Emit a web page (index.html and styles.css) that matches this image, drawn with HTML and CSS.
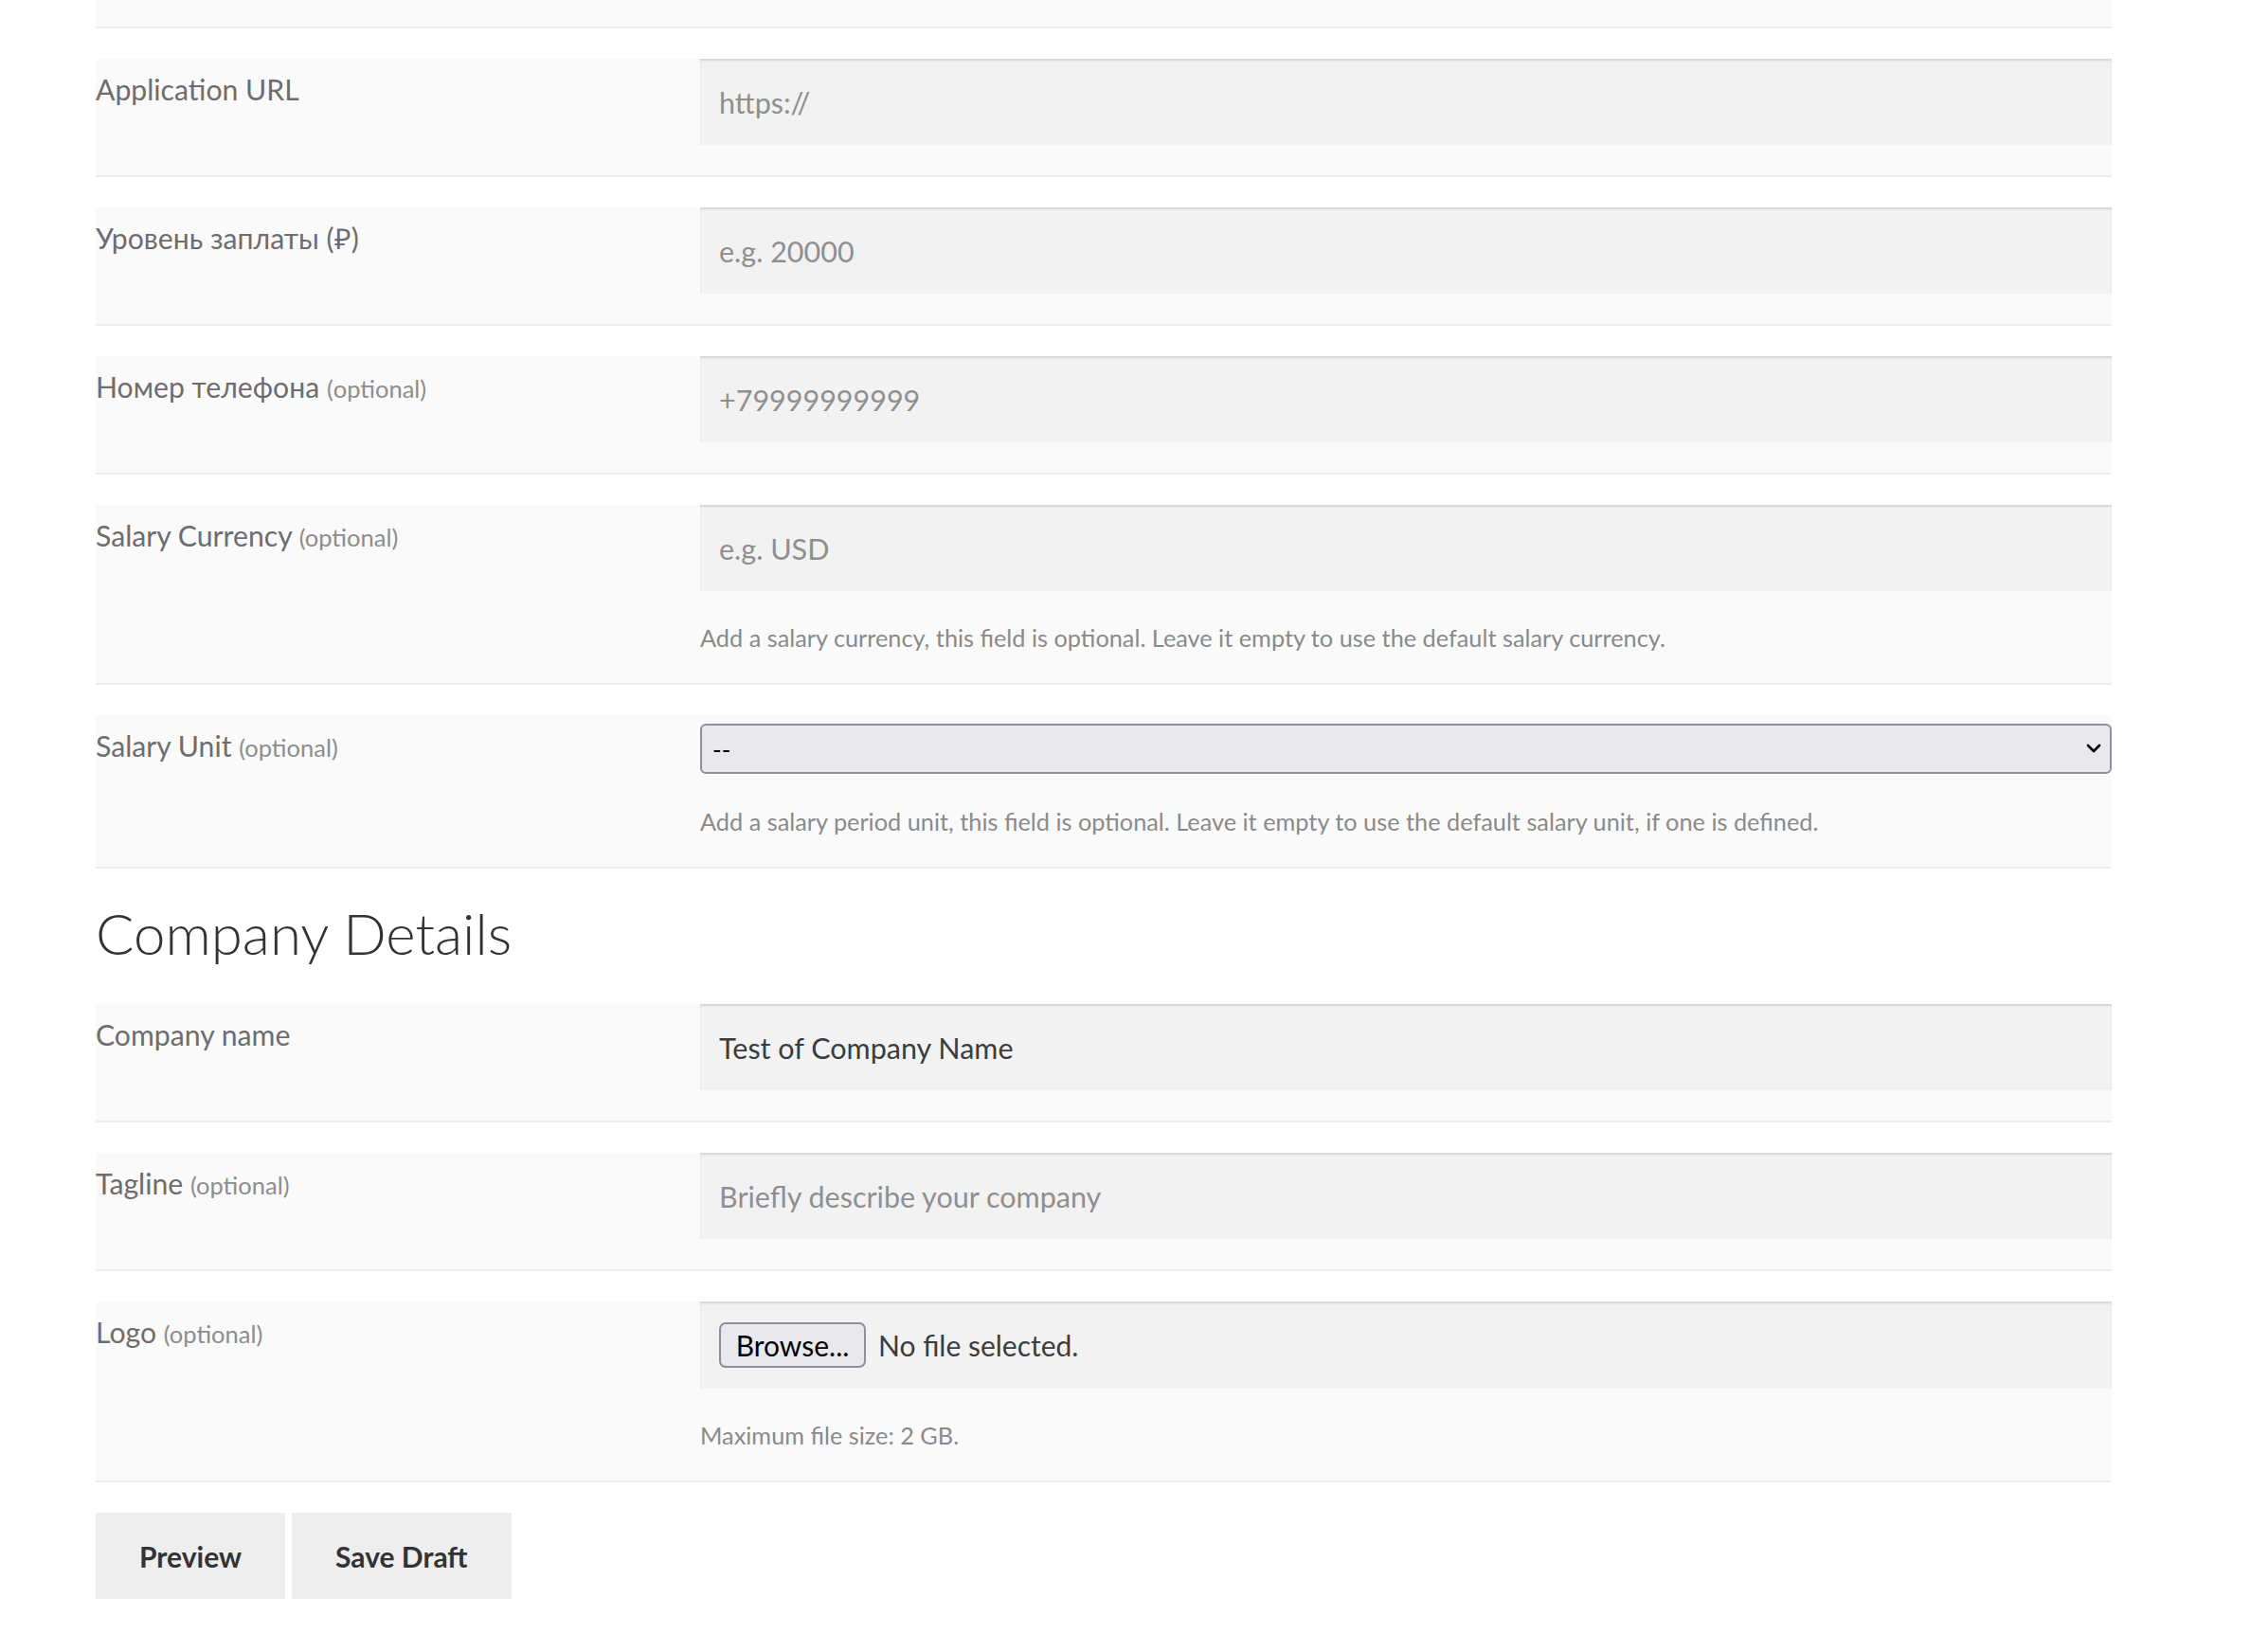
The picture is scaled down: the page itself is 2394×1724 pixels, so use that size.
FILE: index.html
```html
<!DOCTYPE html>
<html lang="en">
<head>
<meta charset="utf-8">
<title>Submit Job</title>
<link rel="stylesheet" href="styles.css">
</head>
<body>
<form class="job-form">
  <div class="row row-cut"></div>

  <div class="row">
    <label class="lbl">Application URL</label>
    <div class="field"><input class="input" type="text" placeholder="https://"></div>
  </div>

  <div class="row">
    <label class="lbl">Уровень заплаты (₽)</label>
    <div class="field"><input class="input" type="text" placeholder="e.g. 20000"></div>
  </div>

  <div class="row">
    <label class="lbl">Номер телефона <small class="opt">(optional)</small></label>
    <div class="field"><input class="input" type="text" placeholder="+79999999999"></div>
  </div>

  <div class="row">
    <label class="lbl">Salary Currency <small class="opt">(optional)</small></label>
    <div class="field">
      <input class="input" type="text" placeholder="e.g. USD">
      <p class="desc">Add a salary currency, this field is optional. Leave it empty to use the default salary currency.</p>
    </div>
  </div>

  <div class="row">
    <label class="lbl">Salary Unit <small class="opt">(optional)</small></label>
    <div class="field field-select">
      <div class="select-wrap">
        <select class="select"><option>--</option></select>
        <svg class="chev" width="16" height="10" viewBox="0 0 16 10"><path d="M2 2 L8 8 L14 2" fill="none" stroke="#000" stroke-width="2.6" stroke-linecap="round" stroke-linejoin="round"/></svg>
      </div>
      <p class="desc desc-select">Add a salary period unit, this field is optional. Leave it empty to use the default salary unit, if one is defined.</p>
    </div>
  </div>

  <h2 class="section-title">Company Details</h2>

  <div class="row">
    <label class="lbl">Company name</label>
    <div class="field"><input class="input filled" type="text" value="Test of Company Name"></div>
  </div>

  <div class="row">
    <label class="lbl">Tagline <small class="opt">(optional)</small></label>
    <div class="field"><input class="input" type="text" placeholder="Briefly describe your company"></div>
  </div>

  <div class="row">
    <label class="lbl">Logo <small class="opt">(optional)</small></label>
    <div class="field">
      <div class="file-box">
        <span class="browse">Browse...</span>
        <span class="file-status">No file selected.</span>
      </div>
      <p class="desc">Maximum file size: 2 GB.</p>
    </div>
  </div>

  <div class="actions">
    <button type="button" class="btn">Preview</button>
    <button type="button" class="btn">Save Draft</button>
  </div>
</form>
</body>
</html>
```

FILE: styles.css
```css
html, body {
  margin: 0;
  padding: 0;
  background: #ffffff;
}

body {
  font-family: "Lato", "Source Sans Pro", "Liberation Sans", sans-serif;
  color: #6d6d6d;
}

.job-form {
  width: 2128px;
  margin-left: 101px;
}

.row {
  display: grid;
  grid-template-columns: 638px 1fr;
  background: #fafafa;
  padding-bottom: 32px;
  border-bottom: 2px solid #ececec;
  margin-bottom: 32px;
}

.row-cut {
  height: 28px;
  padding-bottom: 0;
}

.lbl {
  display: block;
  font-size: 30.2px;
  line-height: 50px;
  padding-top: 7px;
  color: #6d6d6d;
}

.opt {
  font-size: 25.5px;
  color: #8d8d8d;
}

.field {
  display: flex;
  flex-direction: column;
}

.input {
  box-sizing: border-box;
  width: 100%;
  height: 91px;
  margin: 0;
  padding: 0 20px;
  border: 0;
  background: #f2f2f2;
  box-shadow: inset 0 2px 2px rgba(0, 0, 0, 0.12);
  font-family: inherit;
  font-size: 30.5px;
  color: #43454b;
  outline: none;
}

.input::placeholder {
  color: #8f8f8f;
  opacity: 1;
}

.input.filled {
  color: #3b3c40;
}

.desc {
  margin: 33px 0 0;
  font-size: 25.3px;
  line-height: 32px;
  color: #8a8a8a;
}

.field-select {
  padding-top: 9px;
}

.select-wrap {
  position: relative;
}

.select {
  -webkit-appearance: none;
  appearance: none;
  box-sizing: border-box;
  display: block;
  width: 100%;
  height: 53px;
  margin: 0;
  padding: 0 40px 0 11px;
  background: #e9e9ed;
  border: 2px solid #8f8f9d;
  border-radius: 6px;
  font-family: inherit;
  font-size: 26px;
  color: #000;
  outline: none;
}

.chev {
  position: absolute;
  right: 11px;
  top: 21px;
  pointer-events: none;
}

.desc-select {
  margin-top: 34px;
}

.section-title {
  margin: 5px 0 39px;
  font-size: 60px;
  line-height: 72px;
  font-weight: 300;
  color: #333333;
}

.file-box {
  box-sizing: border-box;
  height: 92px;
  display: flex;
  align-items: center;
  padding: 0 20px;
  background: #f2f2f2;
  box-shadow: inset 0 2px 2px rgba(0, 0, 0, 0.12);
}

.browse {
  box-sizing: border-box;
  width: 155px;
  height: 48px;
  display: flex;
  align-items: center;
  justify-content: center;
  background: #e9e9ed;
  border: 2px solid #8f8f9d;
  border-radius: 7px;
  font-size: 30px;
  color: #000;
}

.file-status {
  margin-left: 13px;
  font-size: 30px;
  color: #3b3c40;
}

.actions {
  display: flex;
  gap: 7px;
  margin-top: 0;
}

.btn {
  height: 91px;
  margin: 0;
  padding: 0 46px;
  border: 0;
  background: #eeeeee;
  font-family: inherit;
  font-size: 30px;
  font-weight: 700;
  color: #333333;
}
```
